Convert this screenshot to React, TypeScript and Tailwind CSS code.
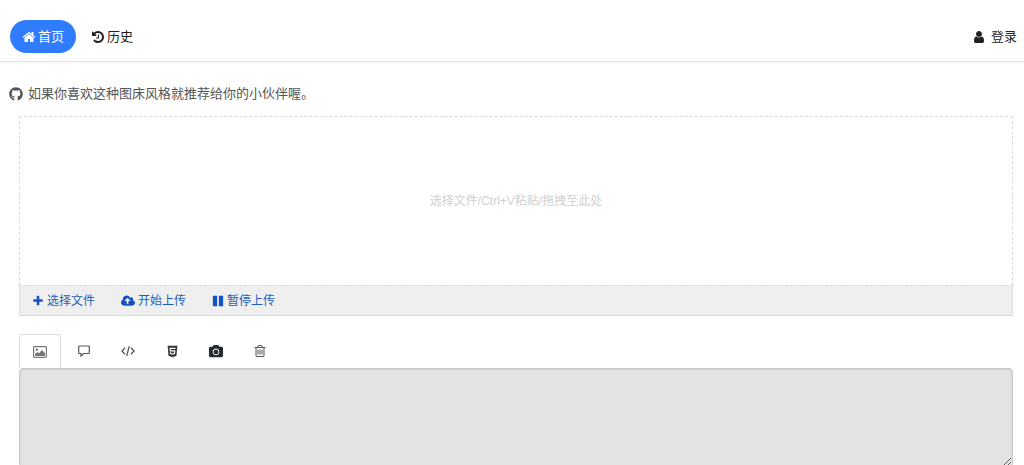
import React from 'react';
import {FaCamera, FaGithub, FaHtml5} from 'react-icons/fa';

type GlyphProps = {
  d: string;
  viewBox?: string;
  className?: string;
};

const Glyph: React.FC<GlyphProps> = ({d, viewBox = '0 0 1792 1792', className}) => (
  <svg viewBox={viewBox} fill="currentColor" className={className} aria-hidden="true">
    <path d={d} />
  </svg>
);

const HOME =
  'M1472 992v480q0 26-19 45t-45 19h-384v-384h-256v384h-384q-26 0-45-19t-19-45v-480q0-1 .5-3t.5-3l575-474 575 474q1 2 1 6zm223-69l-62 74q-8 9-21 11h-3q-13 0-21-7l-692-577-692 577q-12 8-24 7-13-2-21-11l-62-74q-8-10-7-23.500t11-21.500l719-599q32-26 76-26t76 26l244 204v-195q0-14 9-23t23-9h192q14 0 23 9t9 23v408l219 182q10 8 11 21.500t-7 23.500z';
const HISTORY =
  'M1664 896q0 156-61 298t-164 245-245 164-298 61q-172 0-327-72.500t-264-204.500q-7-10-6.500-22.500t8.500-20.500l137-138q10-9 25-9 16 2 23 12 73 95 179 147t225 52q104 0 198.500-40.500t163.500-109.500 109.500-163.500 40.500-198.500-40.500-198.500-109.500-163.500-163.500-109.500-198.500-40.500q-98 0-188 35.500t-160 101.500l137 138q31 30 14 69-17 40-59 40h-448q-26 0-45-19t-19-45v-448q0-42 40-59 39-17 69 14l130 129q107-101 244.500-156.500t284.500-55.500q156 0 298 61t245 164 164 245 61 298zm-640-288v448q0 14-9 23t-23 9h-320q-14 0-23-9t-9-23v-64q0-14 9-23t23-9h224v-352q0-14 9-23t23-9h64q14 0 23 9t9 23z';
const USER =
  'M1536 1399q0 109-62.500 187t-150.500 78h-854q-88 0-150.500-78t-62.500-187q0-85 8.500-160.500t31.500-152 58.500-131 94-89 134.500-34.500q131 128 313 128t313-128q76 0 134.500 34.500t94 89 58.500 131 31.500 152 8.500 160.500zm-256-887q0 159-112.500 271.500t-271.500 112.500-271.500-112.500-112.500-271.500 112.500-271.500 271.500-112.500 271.500 112.500 112.500 271.500z';
const PLUS =
  'M1600 736v192q0 40-28 68t-68 28h-416v416q0 40-28 68t-68 28h-192q-40 0-68-28t-28-68v-416h-416q-40 0-68-28t-28-68v-192q0-40 28-68t68-28h416v-416q0-40 28-68t68-28h192q40 0 68 28t28 68v416h416q40 0 68 28t28 68z';
const CLOUD_UPLOAD =
  'M1280 864q0-14-9-23l-352-352q-9-9-23-9t-23 9l-351 351q-10 12-10 24 0 14 9 23t23 9h224v352q0 13 9.500 22.500t22.500 9.500h192q13 0 22.500-9.500t9.500-22.500v-352h224q13 0 22.500-9.500t9.500-22.500zm640 288q0 159-112.500 271.500t-271.500 112.500h-1088q-185 0-316.500-131.500t-131.500-316.500q0-130 70-240t188-165q-2-30-2-43 0-212 150-362t362-150q156 0 285.500 87t188.500 231q71-62 166-62 106 0 181 75t75 181q0 76-41 138 130 31 213.500 135.500t83.500 238.500z';
const PAUSE =
  'M1664 192v1408q0 26-19 45t-45 19h-512q-26 0-45-19t-19-45v-1408q0-26 19-45t45-19h512q26 0 45 19t19 45zm-896 0v1408q0 26-19 45t-45 19h-512q-26 0-45-19t-19-45v-1408q0-26 19-45t45-19h512q26 0 45 19t19 45z';
const TRASH =
  'M704 736v576q0 14-9 23t-23 9h-64q-14 0-23-9t-9-23v-576q0-14 9-23t23-9h64q14 0 23 9t9 23zm256 0v576q0 14-9 23t-23 9h-64q-14 0-23-9t-9-23v-576q0-14 9-23t23-9h64q14 0 23 9t9 23zm256 0v576q0 14-9 23t-23 9h-64q-14 0-23-9t-9-23v-576q0-14 9-23t23-9h64q14 0 23 9t9 23zm128 724v-948h-896v948q0 22 7 40.500t14.500 27 10.500 8.500h832q3 0 10.500-8.500t14.500-27 7-40.500zm-672-1076h448l-48-117q-7-9-17-11h-317q-10 2-17 11zm928 32v64q0 14-9 23t-23 9h-96v948q0 83-47 143.500t-113 60.500h-832q-66 0-113-58.500t-47-141.500v-952h-96q-14 0-23-9t-9-23v-64q0-14 9-23t23-9h309l70-167q15-37 54-63t79-26h320q40 0 79 26t54 63l70 167h309q14 0 23 9t9 23z';

const PictureIcon = () => (
  <svg viewBox="0 0 14 12" className="h-3 w-[14px] text-[#777]" aria-hidden="true">
    <rect x=".6" y=".6" width="12.800" height="10.800" rx=".8" fill="none" stroke="currentColor" strokeWidth="1.200" />
    <circle cx="3.800" cy="3.800" r="1.200" fill="currentColor" />
    <path d="M2 10V8l2.300-2 1.700 1.300L9 4l3 3.200V10z" fill="currentColor" />
  </svg>
);

const CommentIcon = () => (
  <svg viewBox="0 0 12 12" className="h-3 w-3" fill="none" stroke="currentColor" strokeWidth="1.200" aria-hidden="true">
    <path d="M1.500 1h9q.8 0 .8.800v5.900q0 .8-.8.800H5.500L3 11.200V8.500H1.500q-.8 0-.8-.8V1.800q0-.8.8-.8z" />
  </svg>
);

const CodeIcon = () => (
  <svg viewBox="0 0 14 12" className="h-3 w-[14px]" fill="none" stroke="currentColor" strokeWidth="1.300" aria-hidden="true">
    <path d="M4 2.800L1 6l3 3.200M10 2.800L13 6l-3 3.200M8.300 1.200L5.700 10.800" />
  </svg>
);

const tabs = [
  {label: '图片', icon: <PictureIcon />},
  {label: '评论', icon: <CommentIcon />},
  {label: '代码', icon: <CodeIcon />},
  {label: 'HTML', icon: <FaHtml5 className="h-[13px] w-[13px] text-[#333]" />},
  {label: '相机', icon: <FaCamera className="h-[14px] w-[14px] text-[#262b30]" />},
  {label: '删除', icon: <Glyph d={TRASH} className="h-[14px] w-[14px]" />},
];

const actions = [
  {label: '选择文件', icon: <Glyph d={PLUS} className="h-3 w-3" />},
  {label: '开始上传', icon: <Glyph d={CLOUD_UPLOAD} viewBox="0 0 1920 1792" className="h-[14px] w-[14px]" />},
  {label: '暂停上传', icon: <Glyph d={PAUSE} className="h-3 w-3" />},
];

const Header = () => (
  <header className="flex items-center justify-between border-b border-[#e6e6e6] pt-5 pr-[7px] pb-2 pl-[10px] text-[13px] text-[#222] shadow-[0_1px_2px_rgba(0,0,0,0.05)]">
    <nav className="flex items-center gap-[15px]">
      <a href="#home" className="flex h-[33px] items-center gap-[2px] rounded-full bg-[#2f7cff] px-3 text-white">
        <Glyph d={HOME} className="h-[14px] w-[14px]" />
        首页
      </a>
      <a href="#history" className="flex items-center gap-[2px]">
        <Glyph d={HISTORY} className="h-[14px] w-[14px]" />
        历史
      </a>
    </nav>
    <a href="#login" className="flex items-center gap-[5px]">
      <Glyph d={USER} className="h-[14px] w-[14px]" />
      登录
    </a>
  </header>
);

export default function App() {
  const [active, setActive] = React.useState(0);

  return (
    <div className="h-screen overflow-hidden bg-white font-['Liberation_Sans','Noto_Sans_CJK_SC',sans-serif] leading-5">
      <Header />
      <main className="pt-[22px]">
        <p className="flex items-center gap-[5px] pl-[9px] text-[13px] text-[#555]">
          <FaGithub className="h-[14px] w-[14px]" />
          如果你喜欢这种图床风格就推荐给你的小伙伴喔。
        </p>

        <div className="mt-3 mr-[11px] ml-[19px]">
          {/* Upload area */}
          <section className="text-xs">
            <label className="flex h-[169px] cursor-pointer items-center justify-center border border-b-0 border-dashed border-[#d9d9d9] text-[#d0d0d0]">
              选择文件/Ctrl+V粘贴/拖拽至此处
              <input type="file" multiple className="sr-only" />
            </label>
            <div className="flex h-[31px] gap-[26px] border border-[#dcdcdc] bg-[#efefef] pl-3 text-[#1a5fb8] [border-top-style:dashed]">
              {actions.map(({label, icon}) => (
                <button key={label} type="button" className="flex items-center gap-[3px]">
                  <span className="text-[#1453c4]">{icon}</span>
                  {label}
                </button>
              ))}
            </div>
          </section>

          {/* Result tabs */}
          <div role="tablist" className="mt-[18px] flex gap-[2px]">
            {tabs.map(({label, icon}, index) => (
              <button
                key={label}
                type="button"
                role="tab"
                aria-label={label}
                aria-selected={index === active}
                onClick={() => setActive(index)}
                className={`flex h-[34px] w-[42px] items-center justify-center rounded-t text-[#555] ${
                  index === active ? 'border border-b-0 border-[#ddd]' : ''
                }`}>
                {icon}
              </button>
            ))}
          </div>
          <textarea
            readOnly
            aria-label="上传结果"
            className="block h-[99px] w-full resize-y rounded border border-[#c8c8c8] bg-[#e3e3e3] p-2 text-xs text-[#555] shadow-[inset_0_1px_2px_rgba(0,0,0,0.1)]"
          />
        </div>
      </main>
    </div>
  );
}
